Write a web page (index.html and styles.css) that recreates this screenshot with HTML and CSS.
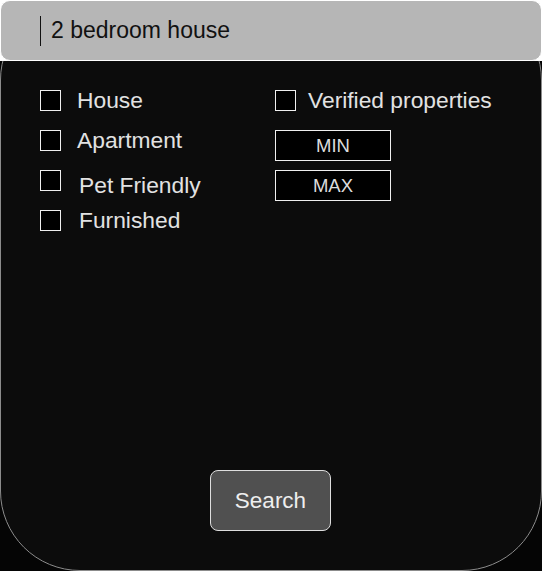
FILE: index.html
```html
<!DOCTYPE html>
<html lang="en">
<head>
<meta charset="utf-8">
<title>Search</title>
<link rel="stylesheet" href="styles.css">
</head>
<body>
<div class="card">
  <div class="search-strip">
    <div class="search-field">
      <span class="caret"></span>
      <span class="query">2 bedroom house</span>
    </div>
  </div>
  <div class="filters">
    <div class="col col-left">
      <label class="opt opt-house"><span class="box"></span><span class="lbl">House</span></label>
      <label class="opt opt-apt"><span class="box"></span><span class="lbl">Apartment</span></label>
      <label class="opt opt-pet"><span class="box"></span><span class="lbl lbl-shift">Pet Friendly</span></label>
      <label class="opt opt-furn"><span class="box"></span><span class="lbl lbl-shift">Furnished</span></label>
    </div>
    <div class="col col-right">
      <label class="opt opt-verified"><span class="box"></span><span class="lbl">Verified properties</span></label>
      <div class="range">MIN</div>
      <div class="range">MAX</div>
    </div>
  </div>
  <div class="actions">
    <button class="search-btn" type="button">Search</button>
  </div>
</div>
</body>
</html>
```
FILE: styles.css
```css
html, body {
  margin: 0;
  padding: 0;
  background: #050505;
}
body {
  width: 542px;
  height: 571px;
  font-family: "Liberation Sans", Arial, sans-serif;
}
.card {
  box-sizing: border-box;
  width: 542px;
  height: 571px;
  border: 1px solid #8c8c8c;
  border-radius: 80px;
  background: #0c0c0c;
  display: flex;
  flex-direction: column;
}
.search-strip {
  margin: -1px -1px 0;
  height: 61px;
  background: #ffffff;
  flex: none;
}
.search-field {
  box-sizing: border-box;
  height: 61px;
  border: 1px solid #ffffff;
  border-radius: 10px;
  background: #b6b6b6;
  display: flex;
  align-items: center;
  padding-left: 39px;
}
.caret {
  width: 1px;
  height: 30px;
  background: #111;
  margin-right: 10px;
}
.query {
  font-size: 23px;
  color: #111;
  line-height: 25px;
}
.filters {
  display: flex;
  padding: 29px 0 0 39px;
  flex: none;
}
.col {
  display: flex;
  flex-direction: column;
}
.col-left {
  width: 235px;
}
.opt {
  display: flex;
  align-items: flex-start;
  height: 21px;
}
.opt-apt { margin-top: 19px; }
.opt-pet { margin-top: 19px; }
.opt-furn { margin-top: 19px; }
.box {
  box-sizing: border-box;
  width: 21px;
  height: 21px;
  border: 1px solid #f0f0f0;
  background: #000;
  flex: none;
}
.lbl {
  font-size: 22.8px;
  color: #e2e2e2;
  line-height: 22px;
  margin-left: 16px;
  margin-top: -1px;
  white-space: nowrap;
}
.lbl-shift {
  margin-left: 18px;
  margin-top: 4px;
}
.opt-furn .lbl-shift { margin-top: -1px; }
.opt-verified .lbl { margin-left: 12px; }
.range {
  box-sizing: border-box;
  width: 116px;
  height: 31px;
  border: 1px solid #f0f0f0;
  background: #000;
  color: #dcdcdc;
  font-size: 18.5px;
  display: flex;
  align-items: center;
  justify-content: center;
  margin-top: 19px;
}
.range + .range {
  margin-top: 9px;
}
.actions {
  margin-top: auto;
  display: flex;
  justify-content: center;
  padding-bottom: 39px;
  padding-right: 1px;
}
.search-btn {
  box-sizing: border-box;
  width: 121px;
  height: 61px;
  border: 1px solid #dedede;
  border-radius: 8px;
  background: #505050;
  color: #eeeeee;
  font-family: "Liberation Sans", Arial, sans-serif;
  font-size: 22.5px;
  padding: 0;
}
```
